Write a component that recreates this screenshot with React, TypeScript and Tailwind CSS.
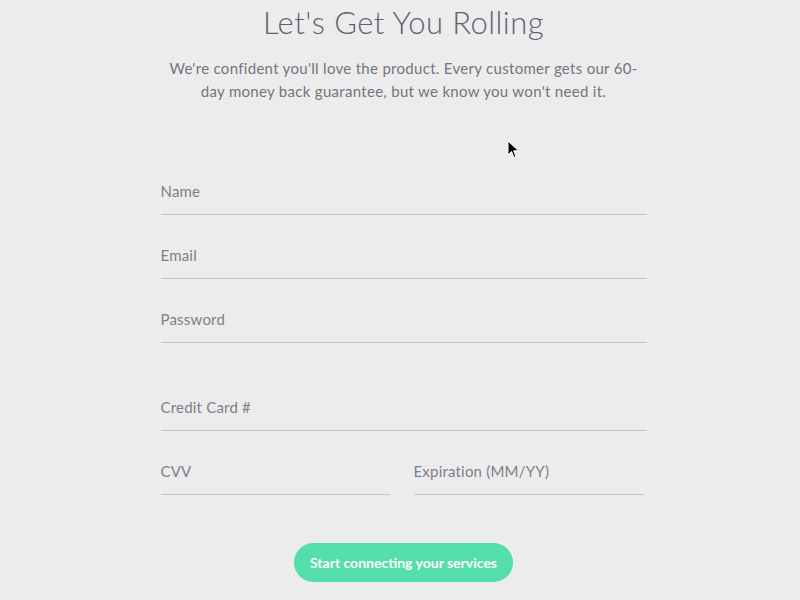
import { useState } from 'react'

type FieldProps = { label: string; className?: string }

function Field({ label, className = '' }: FieldProps) {
  const [value, setValue] = useState('')
  return (
    <label className={`block border-b border-[#c3c3cb] pb-[13px] ${className}`}>
      <input
        value={value}
        onChange={e => setValue(e.target.value)}
        placeholder={label}
        className="block w-full bg-transparent text-[15px] leading-5 tracking-[0.2px] text-[#5f6271] placeholder:text-[#7d7f8a] outline-none"
      />
    </label>
  )
}

export default function App() {
  return (
    <div className="relative h-[600px] w-full overflow-hidden bg-[#ececec] pl-[7px] font-['Lato','Open_Sans',sans-serif]">
      {/* Header */}
      <header className="pt-[2px] text-center">
        <h1 className="text-[31px] font-light leading-10 tracking-[0.45px] text-[#5f6271]">
          Let's Get You Rolling
        </h1>
        <p className="mx-auto mt-[15px] w-[472px] text-[15px] leading-[23px] tracking-[0.3px] text-[#73757f]">
          We're confident you'll love the product. Every customer gets our 60-day money back guarantee, but we know you won't need it.
        </p>
      </header>

      {/* Form */}
      <form className="mx-auto mt-[78px] w-[486px]" onSubmit={e => e.preventDefault()}>
        <Field label="Name" />
        <Field label="Email" className="mt-[30px]" />
        <Field label="Password" className="mt-[30px]" />

        <Field label="Credit Card #" className="mt-[54px]" />
        <div className="mt-[30px] flex gap-[24px] pr-[3px]">
          <Field label="CVV" className="w-[229px]" />
          <Field label="Expiration (MM/YY)" className="flex-1" />
        </div>

        <div className="mt-[48px] flex justify-center">
          <button
            type="submit"
            className="h-[39px] w-[219px] rounded-full bg-[#54dea9] text-[14px] font-bold text-white"
          >
            Start connecting your services
          </button>
        </div>
      </form>

      {/* Mouse pointer */}
      <svg className="absolute left-[507px] top-[140px]" width="14" height="20" viewBox="0 0 14 20">
        <path d="M1 1 L1 15 L4.5 11.5 L7 17.5 L9 16.5 L6.6 10.8 L11.5 10.8 Z" fill="#000" stroke="#fff" strokeWidth="1" strokeLinejoin="round" />
      </svg>
    </div>
  )
}
